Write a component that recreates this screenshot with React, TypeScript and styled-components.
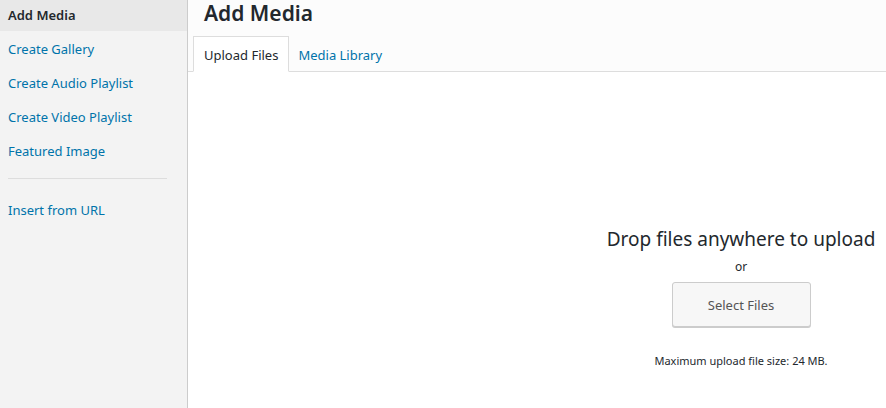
import React from "react";
import styled, { createGlobalStyle } from "styled-components";

const Global = createGlobalStyle`
  html, body { margin: 0; padding: 0; }
  body {
    font-family: "Noto Sans", "Open Sans", sans-serif;
    background: #fff;
    width: 886px;
    height: 408px;
    overflow: hidden;
  }
`;

const Frame = styled.div`
  display: flex;
  width: 886px;
  height: 408px;
`;

const Sidebar = styled.nav`
  width: 187px;
  flex: none;
  background: #f3f3f3;
  border-right: 1px solid #cccccc;
  display: flex;
  flex-direction: column;
  gap: 3px;
`;

const MenuItem = styled.a<{ $active?: boolean }>`
  display: block;
  padding: 6px 8px 7px;
  line-height: 18px;
  font-size: 13px;
  text-decoration: none;
  color: ${(p) => (p.$active ? "#23282d" : "#0073aa")};
  font-weight: ${(p) => (p.$active ? 600 : 400)};
  background: ${(p) => (p.$active ? "#e8e8e8" : "transparent")};
`;

const Separator = styled.div`
  height: 1px;
  background: #dddddd;
  margin: 8px 20px 13px 8px;
`;

const Main = styled.div`
  flex: 1;
  display: flex;
  flex-direction: column;
  min-width: 0;
`;

const Header = styled.div`
  background: #fcfcfc;
  border-bottom: 1px solid #dddddd;
  display: flex;
  flex-direction: column;
`;

const Title = styled.h1`
  margin: 0;
  padding: 0 16px;
  font-size: 21px;
  line-height: 26px;
  font-weight: 600;
  color: #23282d;
`;

const Tabs = styled.div`
  display: flex;
  padding: 10px 5px 0;
`;

const Tab = styled.a<{ $active?: boolean }>`
  display: block;
  padding: 0 10px;
  height: 34px;
  line-height: 36px;
  font-size: 13px;
  text-decoration: none;
  margin-bottom: -1px;
  margin-right: ${(p) => (p.$active ? "-2px" : "0")};
  color: ${(p) => (p.$active ? "#23282d" : "#0073aa")};
  background: ${(p) => (p.$active ? "#ffffff" : "transparent")};
  border: 1px solid ${(p) => (p.$active ? "#dddddd" : "transparent")};
  border-bottom: 1px solid ${(p) => (p.$active ? "#ffffff" : "transparent")};
`;

const Content = styled.div`
  flex: 1;
  background: #ffffff;
  display: flex;
  justify-content: flex-end;
`;

const Uploader = styled.div`
  width: 290px;
  display: flex;
  flex-direction: column;
  align-items: center;
  padding-top: 154px;
`;

const DropText = styled.h2`
  margin: 0;
  font-size: 19px;
  line-height: 26px;
  font-weight: 400;
  color: #23282d;
`;

const OrText = styled.p`
  margin: 7px 0 7px;
  font-size: 12px;
  line-height: 16px;
  color: #23282d;
`;

const SelectButton = styled.button`
  width: 139px;
  height: 45px;
  background: #f7f7f7;
  border: 1px solid #cccccc;
  border-radius: 3px;
  box-shadow: 0 1px 0 #cccccc;
  color: #555555;
  font-family: inherit;
  font-size: 13px;
  cursor: pointer;
`;

const MaxSize = styled.p`
  margin: 26px 0 0;
  font-size: 11px;
  line-height: 16px;
  color: #23282d;
`;

export default function App() {
  return (
    <>
      <Global />
      <Frame>
        <Sidebar>
          <MenuItem $active>Add Media</MenuItem>
          <MenuItem>Create Gallery</MenuItem>
          <MenuItem>Create Audio Playlist</MenuItem>
          <MenuItem>Create Video Playlist</MenuItem>
          <MenuItem>Featured Image</MenuItem>
          <Separator />
          <MenuItem>Insert from URL</MenuItem>
        </Sidebar>
        <Main>
          <Header>
            <Title>Add Media</Title>
            <Tabs>
              <Tab $active>Upload Files</Tab>
              <Tab>Media Library</Tab>
            </Tabs>
          </Header>
          <Content>
            <Uploader>
              <DropText>Drop files anywhere to upload</DropText>
              <OrText>or</OrText>
              <SelectButton>Select Files</SelectButton>
              <MaxSize>Maximum upload file size: 24 MB.</MaxSize>
            </Uploader>
          </Content>
        </Main>
      </Frame>
    </>
  );
}
